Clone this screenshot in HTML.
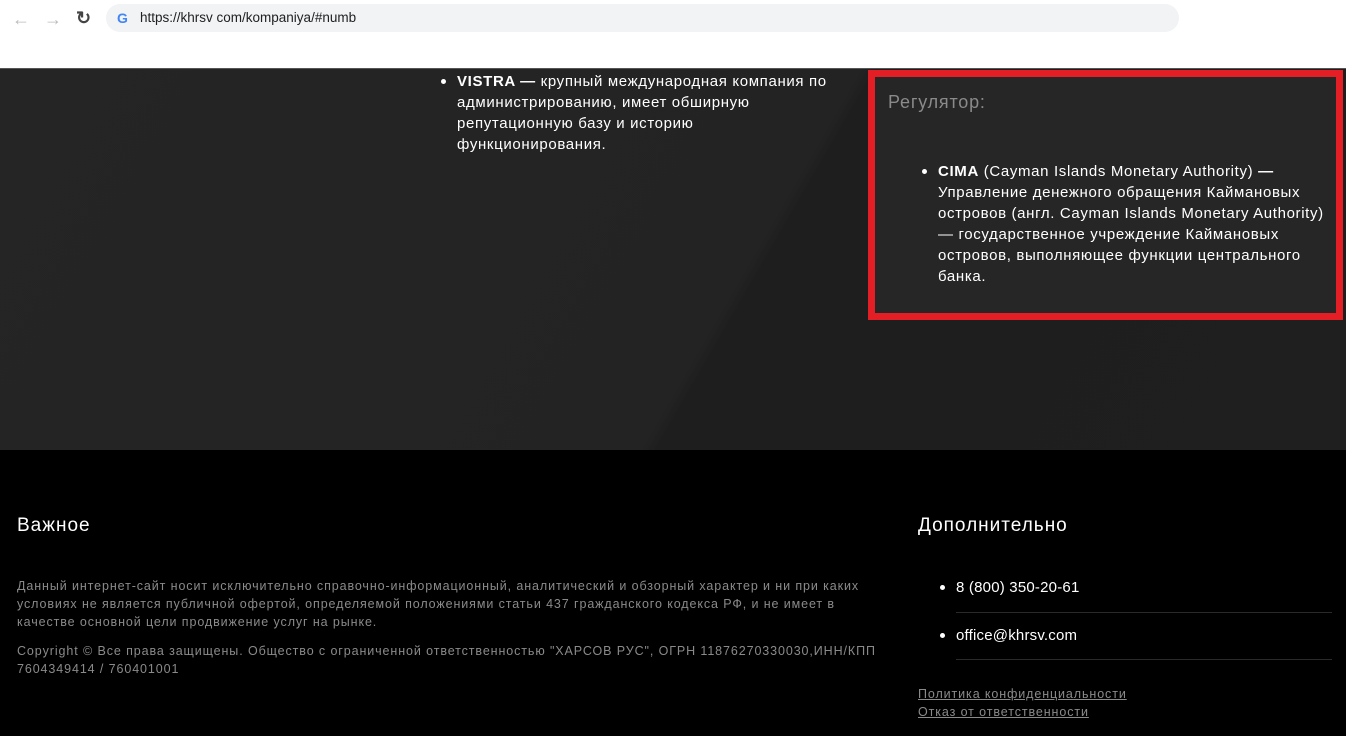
<!DOCTYPE html>
<html><head><meta charset="utf-8"><style>
*{margin:0;padding:0;box-sizing:border-box}
body{width:1346px;height:736px;overflow:hidden;background:#000;font-family:"Liberation Sans",sans-serif;position:relative}
.abs{position:absolute}
#bar{left:0;top:0;width:1346px;height:68px;background:#fff}
#url{left:106px;top:4px;width:1073px;height:28px;background:#f1f3f4;border-radius:14px}
#dark{left:0;top:68px;width:1346px;height:382px;background:linear-gradient(120deg,#252525 0%,#232323 55%,#1e1e1e 56%,#1f1f1f 100%);border-top:1px solid #555}
ul{list-style:none}
li{position:relative;white-space:nowrap}
li:before{content:"";position:absolute;left:-16px;top:8px;width:5px;height:5px;border-radius:50%;background:#fff}
.t{color:#fff;font-size:15px;line-height:21px;letter-spacing:0.65px}
#box{left:868px;top:70px;width:475px;height:250px;border:7px solid #e31e24;background:#262626}
.g{color:#8a8a8a;font-size:12.5px;line-height:18px;white-space:nowrap;letter-spacing:0.9px}
.h{color:#fff;font-size:19px;letter-spacing:1px}
.hr{height:1px;background:#2a2a2a;width:376px}
a{color:#8a8a8a;text-decoration:underline}
</style></head><body>
<div class="abs" id="bar"></div>
<div class="abs" style="left:12px;top:9px;color:#bbb;font-size:18px">&#8592;</div>
<div class="abs" style="left:44px;top:9px;color:#bbb;font-size:18px">&#8594;</div>
<div class="abs" style="left:76px;top:8px;color:#444;font-size:18px;font-weight:bold">&#8635;</div>
<div class="abs" id="url"></div>
<div class="abs" style="left:117px;top:10px;font-weight:bold;font-size:14px;color:#4285f4">G</div>
<div class="abs" style="left:140px;top:10px;font-size:13.5px;color:#202124">https://khrsv com/kompaniya/#numb</div>
<div class="abs" id="dark"></div>
<ul class="abs t" style="left:457px;top:71px"><li><b>VISTRA —</b> крупный международная компания по<br>администрированию, имеет обширную<br>репутационную базу и историю<br>функционирования.</li></ul>
<div class="abs" id="box">
<div class="abs" style="left:13px;top:15px;color:#8a8a8a;font-size:18px;letter-spacing:0.8px">Регулятор:</div>
<ul class="abs t" style="left:63px;top:84px"><li><b>CIMA</b> (Cayman Islands Monetary Authority) <b>—</b><br>Управление денежного обращения Каймановых<br>островов (англ. Cayman Islands Monetary Authority)<br>— государственное учреждение Каймановых<br>островов, выполняющее функции центрального<br>банка.</li></ul>
</div>
<div class="abs h" style="left:17px;top:515px">Важное</div>
<div class="abs g" style="left:17px;top:577px">Данный интернет-сайт носит исключительно справочно-информационный, аналитический и обзорный характер и ни при каких<br>условиях не является публичной офертой, определяемой положениями статьи 437 гражданского кодекса РФ, и не имеет в<br>качестве основной цели продвижение услуг на рынке.</div>
<div class="abs g" style="left:17px;top:642px">Copyright © Все права защищены. Общество с ограниченной ответственностью "ХАРСОВ РУС", ОГРН 11876270330030,ИНН/КПП<br>7604349414 / 760401001</div>
<div class="abs h" style="left:918px;top:515px">Дополнительно</div>
<ul class="abs t" style="left:956px;top:577px;letter-spacing:0.2px"><li>8 (800) 350-20-61</li></ul>
<div class="abs hr" style="left:956px;top:612px"></div>
<ul class="abs t" style="left:956px;top:625px;letter-spacing:0.2px"><li>office@khrsv.com</li></ul>
<div class="abs hr" style="left:956px;top:659px"></div>
<div class="abs g" style="left:918px;top:685px"><a>Политика конфиденциальности</a><br><a>Отказ от ответственности</a></div>
</body></html>
